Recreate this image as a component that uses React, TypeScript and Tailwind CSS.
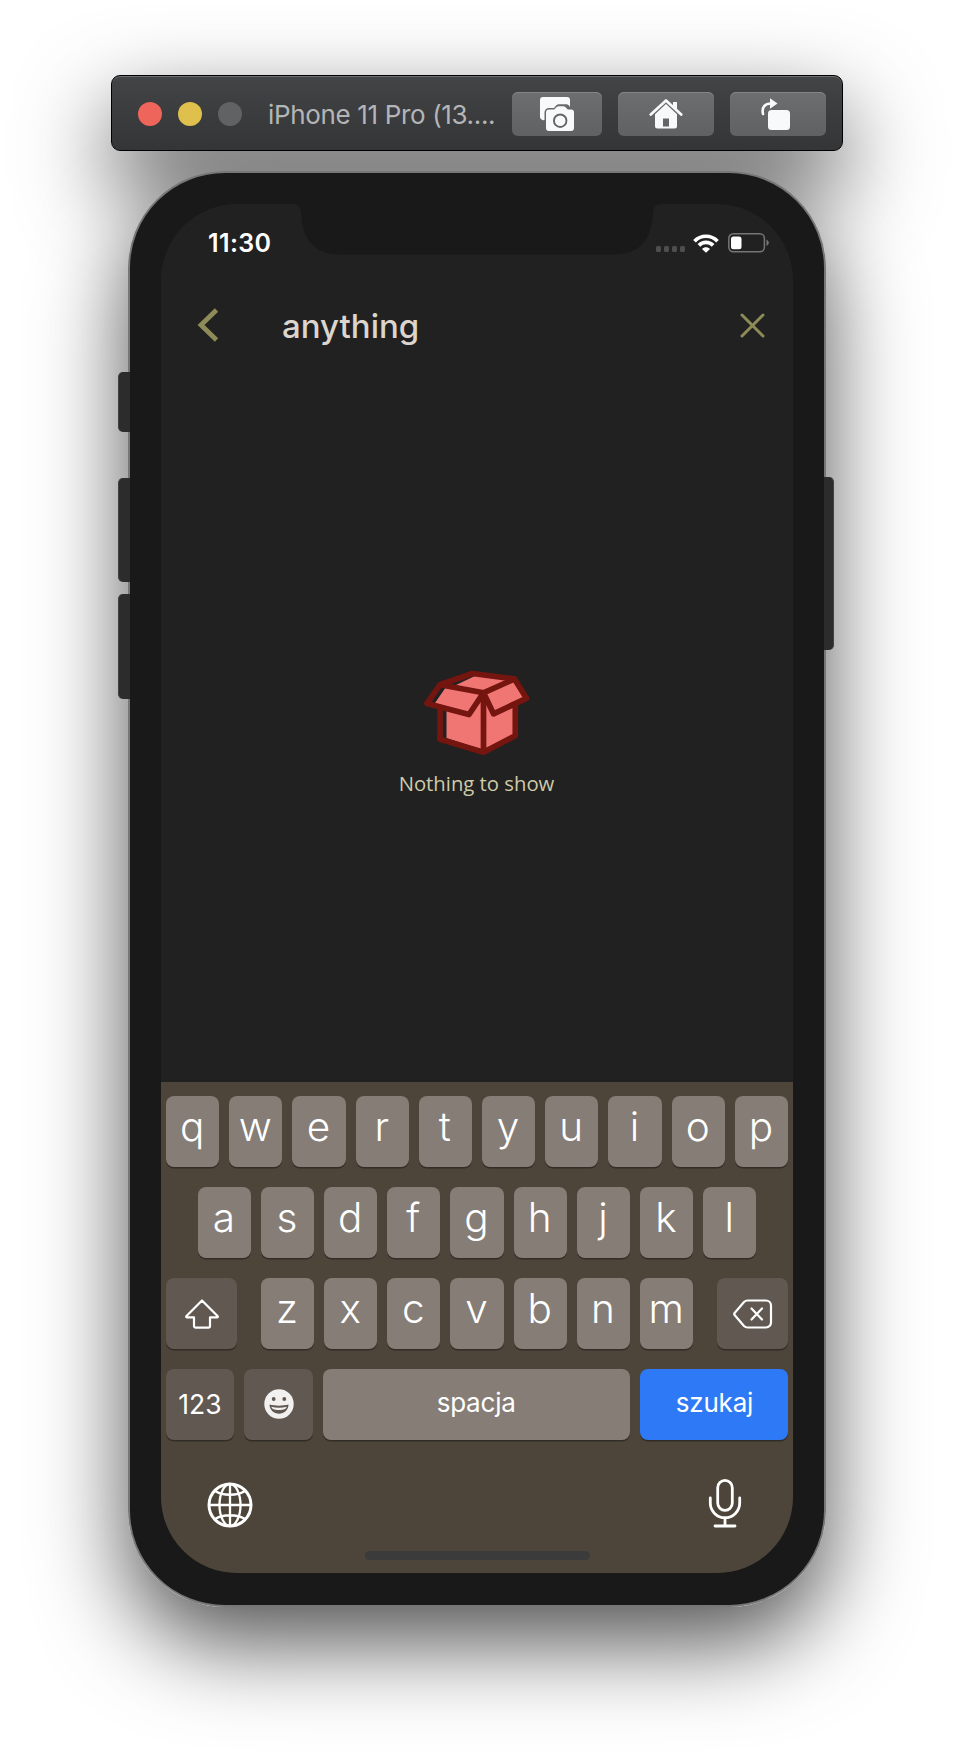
import React from "react";

const keyBase =
  "flex items-center justify-center h-[71px] rounded-[8px] text-white shadow-[0_1.5px_0_#332d28]";

function Letter({ c }: { c: string }) {
  return (
    <div className={keyBase + " w-[53.2px] bg-[#857d76] pr-px pb-[9px] text-[40.5px] leading-none font-[350]"}>{c}</div>
  );
}

function Shot() {
  return (
    <svg width="36" height="36" viewBox="0 0 36 36" className="mb-px mr-px text-[#f8f9fb]">
      <path fill="currentColor" d="M4 1h24a3 3 0 0 1 3 3v7l-1.300-1.700a3.500 3.500 0 0 0-2.400-1h-7.600a3.500 3.500 0 0 0-2.400 1l-2.300 2.700H10A4.500 4.500 0 0 0 5.500 16.500V24A3.500 3.500 0 0 1 1 21V4a3 3 0 0 1 3-3Z" />
      <path fill="currentColor" fillRule="evenodd" d="M10 13.500h5.200l2.500-2.400a3 3 0 0 1 2.100-.8h4.400a3 3 0 0 1 2.100.8l2.500 2.400H32a3 3 0 0 1 3 3V32a3 3 0 0 1-3 3H10a3 3 0 0 1-3-3V16.500a3 3 0 0 1 3-3Zm11.200 4a7.200 7.200 0 1 0 0 14.400a7.200 7.200 0 0 0 0-14.400Zm0 1.900a5.300 5.300 0 1 1 0 10.600a5.300 5.300 0 0 1 0-10.600Z" />
    </svg>
  );
}

function Home() {
  return (
    <svg width="34" height="32" viewBox="0 0 34 32" className="text-[#f8f9fb]">
      <path d="M1.800 16.500 17 2.500l15.200 14" fill="none" stroke="currentColor" strokeWidth="2.700" strokeLinecap="round" strokeLinejoin="round" />
      <path fill="currentColor" d="M24 4h4v9l-4-3.700Z" />
      <path fill="currentColor" fillRule="evenodd" d="M17 6 28 16.300V28a2.500 2.500 0 0 1-2.500 2.500h-17A2.500 2.500 0 0 1 6 28V16.300ZM14 20.500v8h6v-8Z" />
    </svg>
  );
}

function Rotate() {
  return (
    <svg width="30" height="32" viewBox="0 0 30 32" className="mr-[3px] text-[#f8f9fb]">
      <path d="M3 16C1.500 9 5 5.500 11 5.500" fill="none" stroke="currentColor" strokeWidth="2.600" strokeLinecap="round" />
      <path fill="currentColor" d="M10 .3 17.500 5.500 10 10.700Z" />
      <rect x="8" y="12" width="22" height="20" rx="3.500" fill="currentColor" />
    </svg>
  );
}

const tbBtn =
  "flex h-11 items-center justify-center rounded-[6px] bg-linear-to-b from-[#6d6e70] to-[#606163] shadow-[inset_0_1px_0_#858688]";

function Toolbar() {
  return (
    <div className="ml-[111px] h-[76px] w-[732px] rounded-[9px] shadow-[0_36px_90px_rgba(0,0,0,0.68)]">
      <div className="relative z-10 flex h-full items-center rounded-[9px] border border-black bg-linear-to-b from-[#434446] to-[#343537] pt-[2px] pl-[26px] shadow-[inset_0_1px_0_#6e6f71]">
        <div className="flex gap-4">
          <span className="h-6 w-6 rounded-full bg-[#ee655b]" />
          <span className="h-6 w-6 rounded-full bg-[#e0c04c]" />
          <span className="h-6 w-6 rounded-full bg-[#616264]" />
        </div>
        <div className="ml-[26px] w-[244px] text-[26px] tracking-[-0.35px] whitespace-nowrap text-[#b4b5b7]">iPhone 11 Pro (13....</div>
        <div className="flex gap-4">
          <div className={tbBtn + " w-[90px]"}><Shot /></div>
          <div className={tbBtn + " w-24"}><Home /></div>
          <div className={tbBtn + " w-24 pr-1"}><Rotate /></div>
        </div>
      </div>
    </div>
  );
}

function StatusBar() {
  return (
    <div className="relative h-[72px]">
      <svg width="370" height="52" viewBox="0 0 370 52" className="absolute top-[-1px] left-[131px]">
        <path fill="#191919" d="M0 0H370V1C363 1 361 4 360.700 13C359 38 346 51.500 322 51.500H48C24 51.500 11 38 9.300 13C9 4 7 1 0 1Z" />
      </svg>
      <div className="flex h-full justify-between pt-[23px] pr-[24px] pl-[47px]">
        <span className="text-[25px] leading-[32px] font-semibold tracking-[0.4px] text-white">11:30</span>
        <div className="flex h-[32px] items-center">
          <div className="mt-[12px] mr-[8px] flex gap-[2.500px]">
            <i className="h-[5.500px] w-[5.500px] rounded-[1.500px] bg-[#4e4e4e]" />
            <i className="h-[5.500px] w-[5.500px] rounded-[1.500px] bg-[#4e4e4e]" />
            <i className="h-[5.500px] w-[5.500px] rounded-[1.500px] bg-[#4e4e4e]" />
            <i className="h-[5.500px] w-[5.500px] rounded-[1.500px] bg-[#4e4e4e]" />
          </div>
          <svg width="26" height="19" viewBox="0 0 26 19" fill="none" stroke="#fff" strokeWidth="3.700">
            <path d="M1.500 7.200C7.800.6 18.200.6 24.500 7.200" />
            <path d="M5.900 11.400C9.800 7.400 16.200 7.400 20.100 11.400" />
            <path d="M13 18.800 9 14.900C11.200 12.700 14.800 12.700 17 14.900Z" fill="#fff" stroke="none" />
          </svg>
          <svg width="41" height="20" viewBox="0 0 41 20" className="ml-[9px]">
            <rect x=".8" y=".8" width="35.600" height="18" rx="4.500" fill="none" stroke="#767676" strokeWidth="1.500" />
            <rect x="3" y="3.400" width="10.500" height="12.800" rx="2.500" fill="#fff" />
            <path d="M38.500 6.500c3 1.500 3 5 0 6.500Z" fill="#767676" />
          </svg>
        </div>
      </div>
    </div>
  );
}

function Box() {
  return (
    <svg width="106" height="86" viewBox="0 0 106 86" className="mr-px">
      <g fill="#ef7673">
        <path d="M22.500 35 59 23V80L22.500 68Z" />
        <path d="M58 25 90 34V66L58 80Z" />
        <path d="M22 17 57 24 44 43 11 33Z" />
        <path d="M32 15 53 5 84 10 58 23Z" />
        <path d="M60 24 89 10 103 29 69 44Z" />
      </g>
      <g fill="none" stroke="#75150f" strokeWidth="5.700" strokeLinejoin="round" strokeLinecap="round">
        <path d="M59.500 22.800 16 14.800 3 33.500 45 44.500ZL69.500 43.800 102.500 28.300 90.500 9Z" />
        <path d="M16 14.800 48.500 3.500 90.500 9" />
        <path d="M16 38V69.300L59.500 82.300 91.300 65.700V35M59.500 23V82" />
      </g>
    </svg>
  );
}

const smallKey = "bg-[#605851]";

function Keyboard() {
  return (
    <div className="flex h-[491px] flex-col bg-[#4d453a] px-[5px] pt-[14px]">
      <div className="flex flex-col gap-5">
        <div className="flex justify-center gap-[10px]">{"qwertyuiop".split("").map((c) => <Letter key={c} c={c} />)}</div>
        <div className="flex justify-center gap-[10px]">{"asdfghjkl".split("").map((c) => <Letter key={c} c={c} />)}</div>
        <div className="flex justify-between">
          <div className={keyBase + " w-[71px] " + smallKey}>
            <svg width="34" height="30" viewBox="0 0 34 30" fill="none" stroke="#fff" strokeWidth="2.200" strokeLinejoin="round">
              <path d="M17 1.500 32.500 17c.6.700.2 1.300-.5 1.300H25V27a1.700 1.700 0 0 1-1.700 1.700H10.700A1.700 1.700 0 0 1 9 27V18.300H2c-.7 0-1.100-.6-.5-1.300Z" />
            </svg>
          </div>
          <div className="flex gap-[10px]">{"zxcvbnm".split("").map((c) => <Letter key={c} c={c} />)}</div>
          <div className={keyBase + " w-[71px] " + smallKey}>
            <svg width="40" height="30" viewBox="0 0 40 30" fill="none" stroke="#fff" strokeWidth="2.200" strokeLinejoin="round" strokeLinecap="round">
              <path d="M14.500 1.500H33A5 5 0 0 1 38 6.500V23.500A5 5 0 0 1 33 28.500H14.500C13 28.500 12 28 11 27L1.800 16.300C1 15.400 1 14.600 1.800 13.700L11 3C12 2 13 1.500 14.500 1.500Z" />
              <path d="M18.500 9.500 29 20.500M29 9.500 18.500 20.500" />
            </svg>
          </div>
        </div>
        <div className="flex justify-between">
          <div className={keyBase + " w-[68px] text-[26.500px] font-[370] " + smallKey}>123</div>
          <div className={keyBase + " w-[69.500px] " + smallKey}>
            <svg width="30" height="30" viewBox="0 0 30 30" className="mb-px">
              <circle cx="15" cy="15" r="14.700" fill="#f2f1f0" />
              <ellipse cx="9.700" cy="10" rx="1.900" ry="2.100" fill="#605851" />
              <ellipse cx="20.300" cy="10" rx="1.900" ry="2.100" fill="#605851" />
              <path d="M5.500 15.500C11 17 19 17 24.500 15.500C24.500 21 20 24.800 15 24.800S5.500 21 5.500 15.500Z" fill="#605851" />
              <path d="M7.300 17.800C12 19 18 19 22.700 17.800C22 20 20 21 15 21S8 20 7.300 17.800Z" fill="#f2f1f0" />
            </svg>
          </div>
          <div className={keyBase + " w-[307px] bg-[#857d76] pr-px pb-[5px] text-[26px] font-[370] tracking-[-0.2px]"}>spacja</div>
          <div className={keyBase + " w-[148px] bg-[#2e7af6] pb-[5px] pl-px text-[26px] font-[370] tracking-[-0.2px]"}>szukaj</div>
        </div>
      </div>
      <div className="mt-[38px] flex items-start justify-between pr-[46px] pl-[41px]">
        <svg width="46" height="46" viewBox="0 0 46 46" fill="none" stroke="#fff" strokeWidth="2.300" className="mt-[4px]">
          <circle cx="23" cy="23" r="21" strokeWidth="3" />
          <ellipse cx="23" cy="23" rx="10.500" ry="21" />
          <path d="M23 2V44M2 23H44M8 9C16 14 30 14 38 9M8 37C16 32 30 32 38 37" />
        </svg>
        <svg width="34" height="50" viewBox="0 0 34 50" fill="none" stroke="#fff" strokeWidth="2.800" strokeLinecap="round">
          <rect x="9.700" y="2.400" width="14.600" height="30" rx="7.300" />
          <path d="M2.300 20V25a14.700 14.700 0 0 0 29.400 0V20M17 40V48M7 48H27" />
        </svg>
      </div>
      <div className="mx-auto mt-[23px] h-[8.500px] w-[225px] rounded-full bg-[#3b3b3b]" />
    </div>
  );
}

const sideButton = "absolute bg-[#2c2c2c] border-[#414243]";

export default function App() {
  return (
    <div className="h-[1756px] w-[954px] overflow-hidden bg-white pt-[75px] [font-family:Inter,sans-serif]">
      <Toolbar />
      <div className="relative mt-[20px] ml-[128px] h-[1436px] w-[698px] rounded-[97px] shadow-[0_36px_90px_rgba(0,0,0,0.68)]">
        <div className="h-full rounded-[97px] border-2 border-[#777] bg-[#191919] px-[31px] pt-[31px]">
          <div className="flex h-[1369px] w-[632px] flex-col overflow-hidden rounded-[76px] bg-[#212121]">
            <StatusBar />
            <div className="flex h-[98px] items-center pr-[28px] pl-[36px]">
              <svg width="22" height="34" viewBox="0 0 22 34" fill="none" stroke="#8d8c58" strokeWidth="4.800">
                <path d="M19.500 2 4 17 19.500 32" />
              </svg>
              <span className="mt-[2px] ml-[63px] flex-1 text-[33px] leading-none font-medium text-[#dcd5cd]">anything</span>
              <svg width="25" height="25" viewBox="0 0 25 25" stroke="#8d8c58" strokeWidth="3" strokeLinecap="round">
                <path d="M2 2 23 23M23 2 2 23" />
              </svg>
            </div>
            <div className="flex flex-1 flex-col items-center pt-[296px]">
              <Box />
              <span className="mt-[13px] mr-px text-[20.300px] leading-7 text-[#cdcba9] [font-family:'Open_Sans',sans-serif]">Nothing to show</span>
            </div>
            <Keyboard />
          </div>
        </div>
        <i className={sideButton + " top-[306px] right-[-8px] h-[173px] w-[10px] rounded-r-[5px] border-r"} />
        <i className={sideButton + " top-[201px] left-[-10px] h-[60px] w-[12px] rounded-l-[5px] border-l"} />
        <i className={sideButton + " top-[307px] left-[-10px] h-[104px] w-[12px] rounded-l-[5px] border-l"} />
        <i className={sideButton + " top-[423px] left-[-10px] h-[105px] w-[12px] rounded-l-[5px] border-l"} />
      </div>
    </div>
  );
}
